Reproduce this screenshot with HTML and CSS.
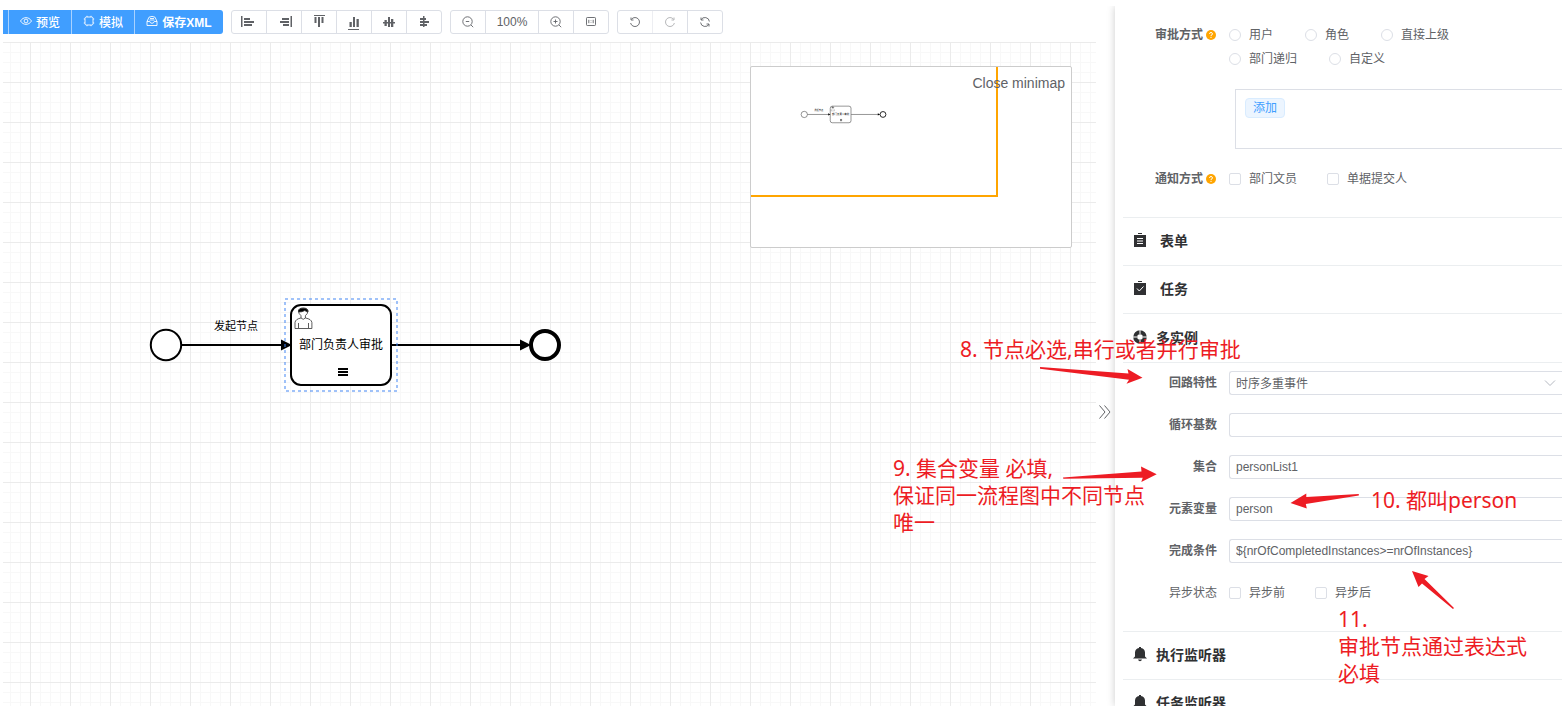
FILE: index.html
```html
<!DOCTYPE html>
<html lang="zh-CN">
<head>
<meta charset="utf-8">
<title>流程设计器</title>
<link rel="stylesheet" href="styles.css">
</head>
<body>
<div class="app">
  <main class="designer">
    <div class="toolbar">
      <div class="group group-primary">
        <button class="btn-primary" type="button">
          <svg class="icon-sm" viewBox="0 0 12 12"><path d="M.5 6C3.200 1.500 8.800 1.500 11.500 6 8.800 10.500 3.200 10.500.5 6z"/><circle cx="6" cy="6" r="1.900"/></svg>预览</button>
        <button class="btn-primary" type="button">
          <svg class="icon-sm" viewBox="0 0 12 12"><rect x="2" y="2" width="8" height="8" rx="1.500"/><path d="M4 .8v1.200M8 .8v1.200M4 10v1.200M8 10v1.200M.8 4H2M.8 8H2M10 4h1.200M10 8h1.200"/></svg>模拟</button>
        <button class="btn-primary btn-save" type="button">
          <svg class="icon-sm" viewBox="0 0 12 12"><path d="M1 6.500 3 2.200Q6 .6 9 2.200L11 6.500V10.500H1zM1 6.500H3.800Q4.200 8.300 6 8.300T8.200 6.500H11M4 3.500H8M3.500 5H8.500"/></svg>保存XML</button>
      </div>
      <div class="group">
        <button class="btn" type="button" aria-label="左对齐"><svg class="icon-fill" viewBox="0 0 16 16"><path d="M0 2h1.500v11H0zM3 4h6v2H3zM3 7h10v2H3zM3 10h8v2H3z"/></svg></button>
        <button class="btn" type="button" aria-label="右对齐"><svg class="icon-fill" viewBox="0 0 16 16"><path d="M14.500 2H16v11h-1.500zM6 4h7v2H6zM4 7h9v2H4zM7 10h6v2H7z"/></svg></button>
        <button class="btn" type="button" aria-label="顶部对齐"><svg class="icon-fill" viewBox="0 0 16 16"><path d="M3 1h11v1H3zM3.500 3h2v6h-2zM7 3h2v10H7zM10.500 3h2v6h-2z"/></svg></button>
        <button class="btn" type="button" aria-label="底部对齐"><svg class="icon-fill" viewBox="0 0 16 16"><path d="M2 15h11v1H2zM3.500 8h2.300v5H3.500zM7 3h2v10H7zM10.500 5h2.300v8h-2.300z"/></svg></button>
        <button class="btn" type="button" aria-label="垂直居中"><svg class="icon-fill" viewBox="0 0 16 16"><path d="M2 8h12v1.500H2zM3.500 6h2.300v6H3.500zM7 3h2v10H7zM10 5h2.300v8H10z"/></svg></button>
        <button class="btn" type="button" aria-label="水平居中"><svg class="icon-fill" viewBox="0 0 16 16"><path d="M7 2h1.500v11H7zM4 4h6v2H4zM4 7h9v2H4zM4 10h7v2H4z"/></svg></button>
      </div>
      <div class="group">
        <button class="btn" type="button" aria-label="缩小"><svg class="icon-line" viewBox="0 0 12 12"><circle cx="5.500" cy="5.500" r="4.700"/><path d="M9 9l2.200 2.200M3.800 5.500h3.400"/></svg></button>
        <button class="btn btn-zoom" type="button">100%</button>
        <button class="btn" type="button" aria-label="放大"><svg class="icon-line" viewBox="0 0 12 12"><circle cx="5.500" cy="5.500" r="4.700"/><path d="M9 9l2.200 2.200M3.500 5.500h4M5.500 3.500v4"/></svg></button>
        <button class="btn" type="button" aria-label="适应画布"><svg class="icon-line" viewBox="0 0 12 12"><rect x="1.500" y="1.500" width="9" height="8" rx=".8"/><path d="M3.800 3.800v3.400M8.200 3.800v3.400M6 4.500v.6M6 6v.6"/></svg></button>
      </div>
      <div class="group">
        <button class="btn" type="button" aria-label="撤销"><svg class="icon-line" viewBox="0 0 12 12"><path d="M2.500 3.200A4.500 4.500 0 1 1 1.600 7M2 1.500V4H4.500"/></svg></button>
        <button class="btn" type="button" aria-label="重做" disabled><svg class="icon-line" viewBox="0 0 12 12"><path d="M9.500 3.200A4.500 4.500 0 1 0 10.400 7M10 1.500V4H7.500"/></svg></button>
        <button class="btn" type="button" aria-label="重新绘制"><svg class="icon-line" viewBox="0 0 12 12"><path d="M2 3.800A4.500 4.500 0 0 1 10.400 5.500M2 1.500V4H4.500M10 8.200A4.500 4.500 0 0 1 1.600 6.500M10 10.500V8H7.500"/></svg></button>
      </div>
    </div>
    <div class="canvas">
      <svg class="diagram" width="640" height="460" viewBox="3 42 640 460">
        <g id="flow">
          <circle cx="166" cy="345" r="15.200" fill="#fff" stroke="#000" stroke-width="2"/>
          <path d="M182 345H283" stroke="#000" stroke-width="2"/>
          <text x="236" y="330" font-size="11" text-anchor="middle">发起节点</text>
          <rect x="291" y="305" width="100" height="80" rx="10" fill="#fff" stroke="#000" stroke-width="2"/>
          <path d="M281 339.500l11 5.500-11 5.500z"/>
          <g fill="#fff" stroke="#333" stroke-width=".8">
            <path d="M295 328.500v-6q.5-3.500 6-4.500v-2.300q-2.500-2.200-2.500-4.400 0-3.300 4.700-3.300t4.700 3.300q0 2.200-2.500 4.400v2.300q6 1 6.500 4.500v6zM298.500 328v-5M308.500 328v-5M301 318q2.300 2.600 4.400 0"/>
            <path d="M298.500 312q-.5-3.700 4.700-3.700t4.700 3.700q-2-.3-3-1.500-3 1.700-6.400 1.500z" fill="#000"/>
          </g>
          <text x="341" y="349" font-size="12" text-anchor="middle">部门负责人审批</text>
          <path d="M338 369h10M338 372h10M338 375h10" stroke="#000" stroke-width="2"/>
          <path d="M392 345H522" stroke="#000" stroke-width="2"/>
          <path d="M520 339.500l11 5.500-11 5.500z"/>
          <circle cx="545" cy="345" r="14" fill="#fff" stroke="#000" stroke-width="4"/>
        </g>
        <rect class="selection" x="285" y="299" width="112" height="92"/>
      </svg>
      <div class="minimap">
        <svg class="minimap-flow" width="140" height="60" viewBox="0 0 140 60"><use href="#flow" transform="translate(18.800 -24.200) scale(.2077)"/></svg>
        <div class="minimap-view"></div>
        <button class="minimap-toggle" type="button">Close minimap</button>
      </div>
    </div>
  </main>

  <div class="gutter">
    <button class="collapse" type="button" aria-label="收起面板"><svg width="12" height="14" viewBox="0 0 12 14"><path d="M.5.5 6 7 .5 13.500M5.500.5 11 7 5.500 13.500"/></svg></button>
  </div>

  <aside class="panel">
    <form class="form form-top">
      <div class="row">
        <span class="label">审批方式<svg class="help" viewBox="0 0 10 10"><circle cx="5" cy="5" r="5"/><path d="M3.500 3.900Q3.600 2.500 5 2.500T6.500 3.900Q6.500 4.800 5 5.400V6.200M5 7v1"/></svg></span>
        <div class="choices choices-radio">
          <label class="choice"><input type="radio" name="way">用户</label>
          <label class="choice"><input type="radio" name="way">角色</label>
          <label class="choice"><input type="radio" name="way">直接上级</label>
          <label class="choice"><input type="radio" name="way">部门递归</label>
          <label class="choice"><input type="radio" name="way">自定义</label>
        </div>
      </div>
      <div class="people"><button class="tag" type="button">添加</button></div>
      <div class="row">
        <span class="label">通知方式<svg class="help" viewBox="0 0 10 10"><circle cx="5" cy="5" r="5"/><path d="M3.500 3.900Q3.600 2.500 5 2.500T6.500 3.900Q6.500 4.800 5 5.400V6.200M5 7v1"/></svg></span>
        <div class="choices">
          <label class="choice"><input type="checkbox">部门文员</label>
          <label class="choice"><input type="checkbox">单据提交人</label>
        </div>
      </div>
    </form>

    <button class="section section-wide" type="button"><svg class="section-icon" viewBox="0 0 14 16"><path d="M1 3h12v12H1zM5 1h4v1H5z"/><path class="cut" d="M4 6.500h6M4 9h6M4 11.500h6"/></svg>表单</button>
    <button class="section section-wide" type="button"><svg class="section-icon" viewBox="0 0 14 16"><path d="M1 3h12v12H1zM5 1h4v1H5z"/><path class="cut" d="M4 8.500 6.300 11 10.500 6.500"/></svg>任务</button>
    <button class="section section-open" type="button"><svg class="section-icon" viewBox="0 0 14 16"><circle class="ring" cx="7" cy="8" r="4.800"/><path class="cut" d="M7 0v5M7 11v5M0 8h4M10 8h4"/></svg>多实例</button>
    <form class="form form-loop">
      <div class="row"><label class="label" for="loop">回路特性</label>
        <div class="select"><select class="field" id="loop"><option>时序多重事件</option></select><svg class="caret" viewBox="0 0 12 6"><path d="M1 .5 6 5.500 11 .5"/></svg></div></div>
      <div class="row"><label class="label" for="base">循环基数</label><input class="field" id="base" type="text"></div>
      <div class="row"><label class="label" for="coll">集合</label><input class="field" id="coll" type="text" value="personList1"></div>
      <div class="row"><label class="label" for="elem">元素变量</label><input class="field" id="elem" type="text" value="person"></div>
      <div class="row"><label class="label" for="cond">完成条件</label><input class="field" id="cond" type="text" value="${nrOfCompletedInstances&gt;=nrOfInstances}"></div>
      <div class="row"><span class="label label-light">异步状态</span>
        <div class="choices">
          <label class="choice"><input type="checkbox">异步前</label>
          <label class="choice"><input type="checkbox">异步后</label>
        </div></div>
    </form>
    <button class="section" type="button"><svg class="section-icon" viewBox="0 0 14 16"><path d="M0 12.500 2 10.500V6.500Q2.200 2.800 6 2V1h2v1q3.800.8 4 4.500v4l2 2zM5 13.500h4Q8.500 15.300 7 15.300T5 13.500z"/></svg>执行监听器</button>
    <button class="section" type="button"><svg class="section-icon" viewBox="0 0 14 16"><path d="M0 12.500 2 10.500V6.500Q2.200 2.800 6 2V1h2v1q3.800.8 4 4.500v4l2 2zM5 13.500h4Q8.500 15.300 7 15.300T5 13.500z"/></svg>任务监听器</button>
  </aside>

  <div class="notes">
    <svg class="arrows" width="680" height="376" viewBox="884 330 680 376">
      <path d="M1040 367l88.500 6.500-1-4.500 15 8.700-16 6 2.500-4-89-11z"/>
      <path d="M1063 477.500l78.500-6-.5-5 15.700 7.800-15.400 7.700 1.400-4.300-79.400 1z"/>
      <path d="M1290.500 503l15.800-9.500v3.500l52.500-3v1.500l-53 8.500 1 4.500z"/>
      <path d="M1412 571l16.500 5-4 3 29.500 29-1 1-31-25.500-3.500 3.500z"/>
    </svg>
    <p class="note note-8">8. 节点必选,串行或者并行审批</p>
    <p class="note note-9">9. 集合变量 必填,<br>保证同一流程图中不同节点<br>唯一</p>
    <p class="note note-10">10. 都叫person</p>
    <p class="note note-11">11.<br>审批节点通过表达式<br>必填</p>
  </div>
</div>
</body>
</html>
```
FILE: styles.css
```css
* { box-sizing: border-box; }
body {
  margin: 0;
  background: #fff;
  color: #606266;
  font-family: "Liberation Sans", "Noto Sans CJK SC", sans-serif;
  font-size: 12px;
}
button, input, select { font: inherit; color: inherit; margin: 0; }
svg { display: block; flex: none; }

.app {
  position: relative;
  display: flex;
  height: 100vh;
  padding: 0 2px 0 3px;
  overflow: hidden;
}
.designer {
  display: flex;
  flex: 1;
  flex-direction: column;
  min-width: 0;
  gap: 8px;
  padding-top: 10px;
}

/* Toolbar */
.toolbar { display: flex; gap: 8px; }
.group {
  display: flex;
  height: 24px;
  border: 1px solid #dcdfe6;
  border-radius: 3px;
}
.group-primary {
  padding-left: 5px;
  border: 0;
  border-radius: 0 3px 3px 0;
  background: #409eff;
}
.btn, .btn-primary {
  display: flex;
  align-items: center;
  justify-content: center;
  padding: 0;
  border: 0;
  background: none;
}
.btn { width: 35px; }
.btn:first-child { width: 34px; }
.btn + .btn { border-left: 1px solid #dcdfe6; }
.btn:disabled { opacity: .5; }
.btn.btn-zoom { width: 53px; }
.btn-primary {
  gap: 4px;
  width: 63px;
  padding-bottom: 2px;
  border-left: 1px solid #a9d2ff;
  color: #fff;
  font-weight: 500;
}
.btn-save { width: 89px; font-weight: 700; }
.icon-sm, .icon-line {
  width: 12px;
  height: 12px;
  fill: none;
  stroke: currentColor;
  stroke-width: .9;
}
.icon-fill { width: 16px; height: 16px; fill: #606266; }

/* Canvas */
.canvas {
  position: relative;
  flex: 1;
  overflow: hidden;
  background-image:
    linear-gradient(90deg, #ebebeb 1px, transparent 1px),
    linear-gradient(#ebebeb 1px, transparent 1px),
    linear-gradient(90deg, #f8f8f8 1px, transparent 1px),
    linear-gradient(#f8f8f8 1px, transparent 1px);
  background-size: 40px 40px, 40px 40px, 10px 10px, 10px 10px;
  background-position: 27px 0, 0 0, 7px 0, 0 0;
}
.diagram text { font-family: "Noto Sans CJK SC", sans-serif; fill: #000; }
.selection {
  fill: none;
  stroke: #4285f4;
  stroke-opacity: .5;
  stroke-width: 2;
  stroke-dasharray: 3 3;
}
.minimap {
  position: absolute;
  top: 24px;
  right: 24px;
  width: 322px;
  height: 182px;
  overflow: hidden;
  border: 1px solid #ccc;
  border-radius: 2px;
  background: #fff;
}
.minimap-flow { position: absolute; top: 0; left: 0; }
.minimap-view {
  position: absolute;
  top: 0;
  left: 0;
  width: 247px;
  height: 130px;
  border: solid #ffa500;
  border-width: 0 2px 2px 0;
}
.minimap-toggle {
  position: absolute;
  top: 8px;
  right: 6px;
  padding: 0;
  border: 0;
  background: none;
  font-size: 14px;
  line-height: 16px;
}

.gutter {
  display: flex;
  align-items: center;
  flex: 0 0 19px;
  padding-top: 118px;
}
.collapse { padding: 0 0 0 3px; border: 0; background: none; }
.collapse svg { fill: none; stroke: #606266; }

/* Properties panel */
.panel {
  flex: 0 0 447px;
  margin-top: 6px;
  padding-left: 8px;
  background: #fff;
  box-shadow: 0 0 8px #ccc;
  clip-path: inset(0 0 0 -12px);
}
.form { display: flex; flex-direction: column; }
.form-top { padding: 17px 0 26px; }
.form-loop { gap: 18px; padding: 8px 0 26px; }
.row { display: flex; gap: 12px; line-height: 24px; }
.label {
  display: flex;
  align-items: center;
  justify-content: flex-end;
  flex: 0 0 94px;
  height: 24px;
  font-weight: 700;
}
.label-light { font-weight: 400; }
.help { width: 10px; height: 10px; margin: 0 1px 0 3px; fill: #ffa500; }
.help path { fill: none; stroke: #fff; }
.choices { display: flex; flex-wrap: wrap; column-gap: 30px; }
.choices-radio { column-gap: 32px; max-width: 280px; }
.choice { display: flex; align-items: center; gap: 8px; height: 24px; }
.choice input {
  appearance: none;
  width: 12px;
  height: 12px;
  border: 1px solid #dcdfe6;
  border-radius: 2px;
  background: #fff;
}
.choice input[type="radio"] { border-radius: 50%; }
.people {
  height: 60px;
  margin: 18px 0 18px 112px;
  padding: 8px 9px;
  border: 1px solid #dcdfe6;
  border-right: 0;
}
.tag {
  display: block;
  height: 20px;
  padding: 0 7px;
  border: 1px solid #d9ecff;
  border-radius: 4px;
  background: #ecf5ff;
  color: #409eff;
  line-height: 18px;
}
.field {
  flex: 1;
  width: 100%;
  min-width: 0;
  height: 24px;
  padding: 0 6px;
  border: 1px solid #dcdfe6;
  border-right: 0;
  border-radius: 3px 0 0 3px;
  background: #fff;
}
.select { position: relative; display: flex; flex: 1; }
.select .field { appearance: none; padding-bottom: 2px; }
.caret {
  position: absolute;
  top: 9px;
  right: 6px;
  width: 12px;
  height: 6px;
  fill: none;
  stroke: #b4b8c0;
}
.section {
  display: flex;
  align-items: center;
  gap: 9px;
  width: 100%;
  height: 48px;
  padding: 0 0 3px 10px;
  border: 0;
  border-top: 1px solid #ebeef0;
  background: none;
  color: #303133;
  font-size: 14px;
  font-weight: 700;
}
.section-wide { gap: 13px; }
.section-open { height: 50px; border-bottom: 1px solid #ebeef0; }
.section-icon { width: 14px; height: 16px; fill: #303133; }
.section-icon .cut { fill: none; stroke: #fff; stroke-width: 1; }
.section-icon .ring { fill: none; stroke: #303133; stroke-width: 4; }

/* Review notes laid over the designer, anchored to the panel side */
.notes {
  position: absolute;
  top: 330px;
  right: 0;
  width: 680px;
  height: 376px;
  pointer-events: none;
}
.arrows { fill: #ed1c24; }
.note {
  position: absolute;
  margin: 0;
  color: #ed1c24;
  font-family: "Noto Sans", "Noto Sans CJK SC", sans-serif;
  font-size: 21px;
  line-height: 27px;
  white-space: nowrap;
}
.note-8 { top: 6px; left: 76px; }
.note-9 { top: 125px; left: 9px; }
.note-10 { top: 157px; left: 487px; }
.note-11 { top: 276px; left: 454px; }
```
